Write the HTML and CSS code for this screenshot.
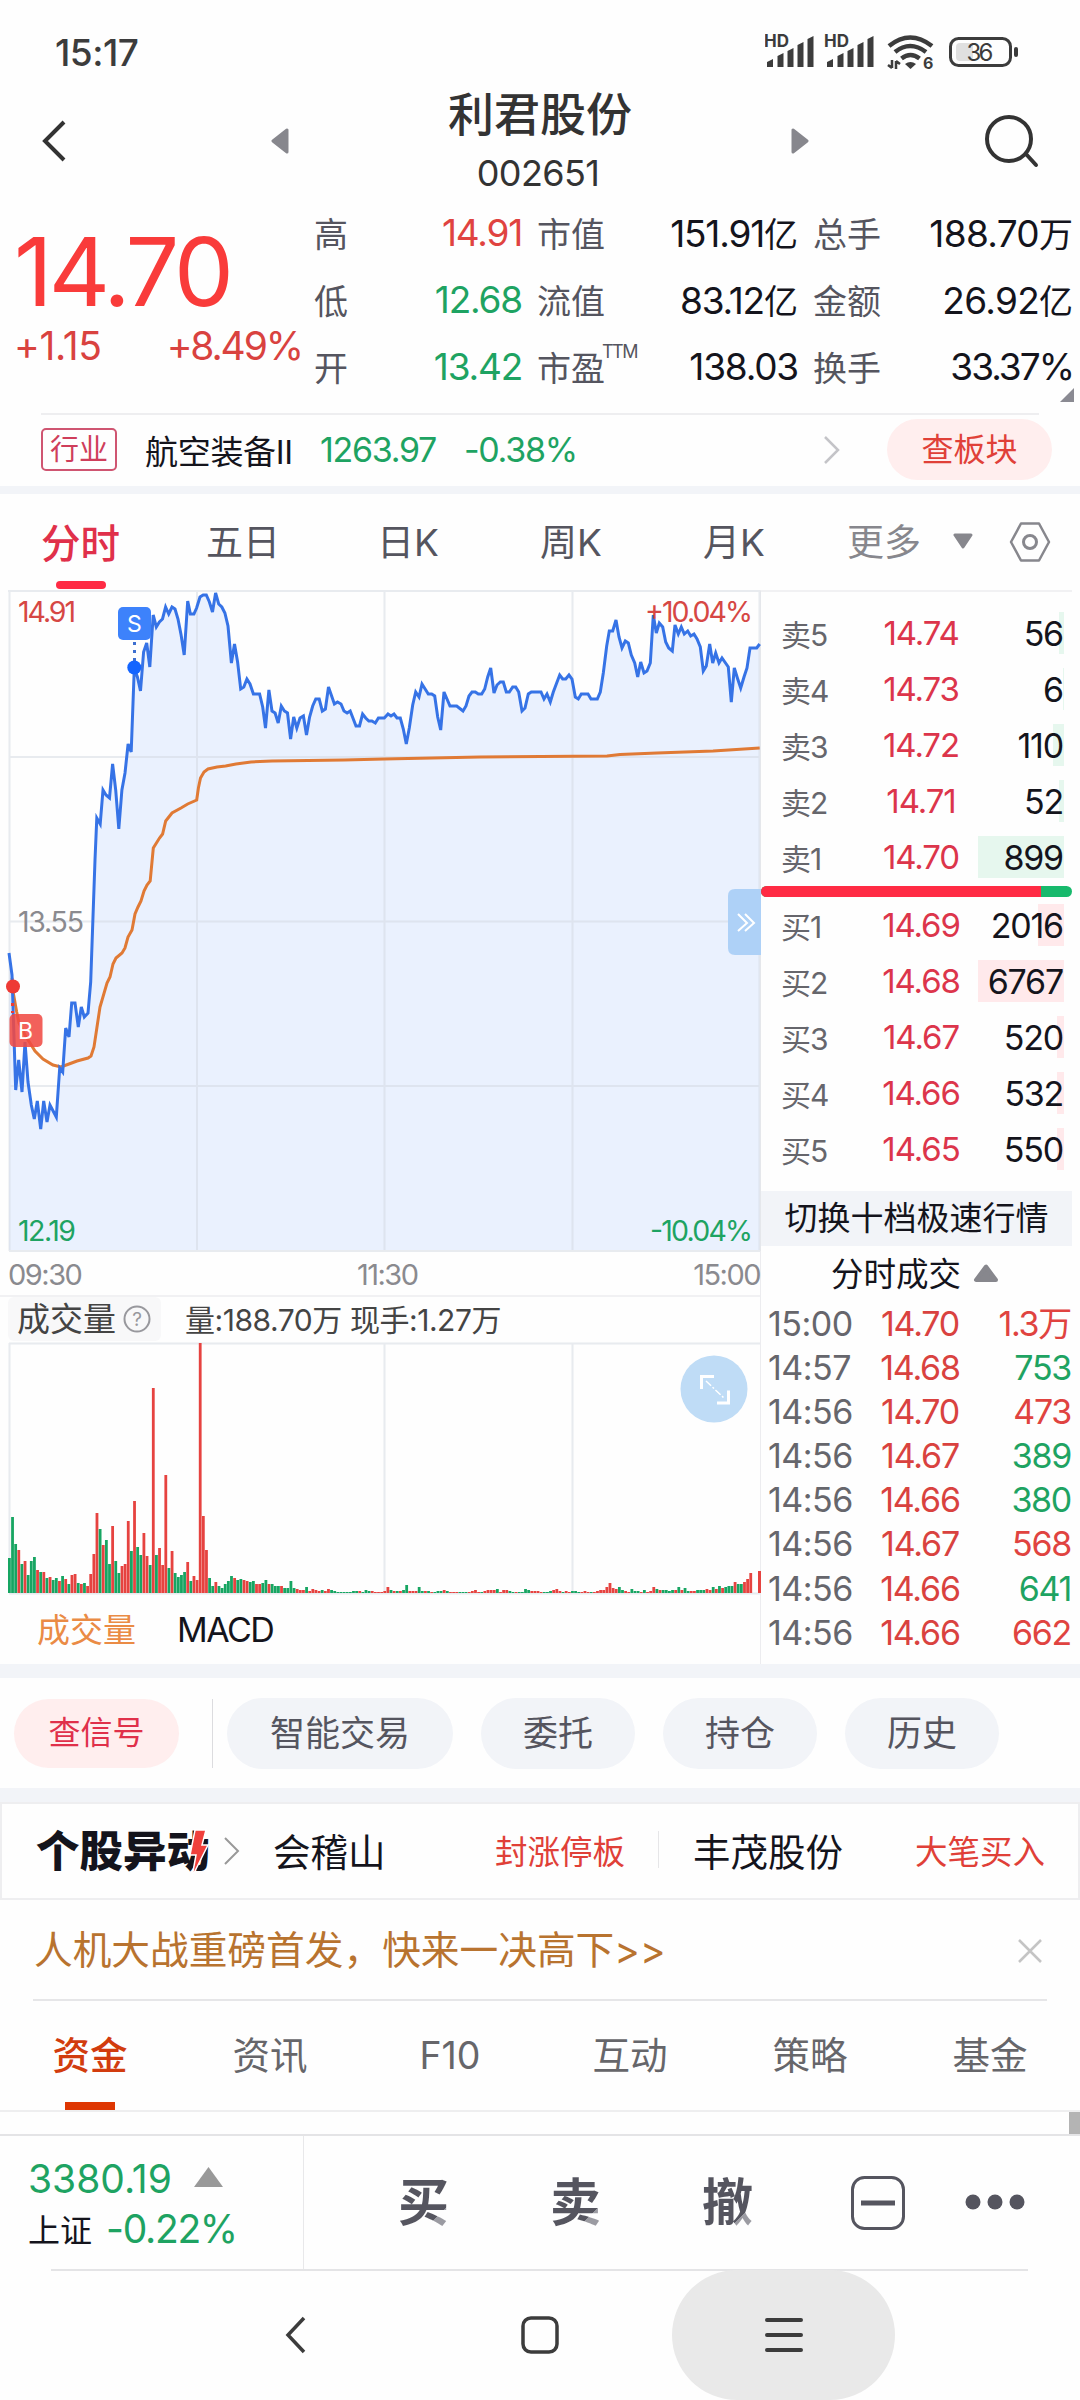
FILE: index.html
```html
<!DOCTYPE html>
<html lang="zh-CN">
<head>
    <meta charset="UTF-8">
    <title>利君股份 002651</title>
    <link rel="stylesheet" href="styles.css">
</head>
<body>
    <div class="status-bar">
        <span class="clock">15:17</span>
        <svg class="status-icons" width="270" height="40" viewBox="0 0 270 40">
            <defs>
                <g id="signal">
                    <text x="-1" y="14" font-size="17" font-weight="700" textLength="25">HD</text>
                    <path d="M2 34v-5l6-3v8zM12.500 34V23l6-3v14zM22.500 34V18l6-3v19zM32.500 34V12l6-3v25zM42.500 34V6l6-3v31z"/>
                </g>
            </defs>
            <use href="#signal" x="0"/>
            <use href="#signal" x="60"/>
            <g fill="none" stroke="#3c3c3c" stroke-width="4.500">
                <path d="M124 13q21-17 43 0M130 19q15-12 31 0M136.500 25.500q9-7 18 0"/>
            </g>
            <path d="M140 31q5.500-4 11 0l-5.500 5z"/>
            <path d="M127 27v8M127 35l-4-3M131 36v-8M131 28l4 3" stroke="#3c3c3c" stroke-width="2.500"/>
            <text x="158" y="36" font-size="16" font-weight="700">6</text>
            <rect x="185.500" y="5.500" width="60" height="27" rx="8" fill="none" stroke="#3c3c3c" stroke-width="3"/>
            <rect x="191" y="10" width="17" height="18" rx="4" fill="#e0e0e0"/>
            <rect x="249" y="14" width="4" height="10" rx="2"/>
            <text x="201.500" y="28" font-size="24" textLength="27">36</text>
        </svg>
    </div>

    <div class="header">
        <svg class="back" width="26" height="42" viewBox="0 0 26 42"><path d="M23 2L4 21l19 19" fill="none" stroke="#333" stroke-width="4"/></svg>
        <svg class="prev" width="18" height="26" viewBox="0 0 18 26"><path d="M16 2v22L2 13z"/></svg>
        <div class="stock">
            <div class="stock-name">利君股份</div>
            <div class="stock-code">002651</div>
        </div>
        <svg class="next" width="18" height="26" viewBox="0 0 18 26"><path d="M2 2v22L16 13z"/></svg>
        <svg class="search" width="56" height="56" viewBox="0 0 56 56"><path d="M42 40l10 11" stroke="#333" stroke-width="4" stroke-linecap="round"/><circle cx="25" cy="25" r="22" fill="none" stroke="#333" stroke-width="4"/></svg>
    </div>

    <div class="quote">
        <div class="price-box">
            <div class="price">14.70</div>
            <div class="change"><span class="diff">+1.15</span><span>+8.49%</span></div>
        </div>
        <div class="stats">
            <span>高</span><b class="red">14.91</b><span>市值</span><b>151.91<i>亿</i></b><span>总手</span><b>188.70<i>万</i></b>
            <span>低</span><b class="green">12.68</b><span>流值</span><b>83.12<i>亿</i></b><span>金额</span><b>26.92<i>亿</i></b>
            <span>开</span><b class="green">13.42</b><span class="ttm">市盈<sup>TTM</sup></span><b>138.03</b><span>换手</span><b class="rate">33.37%</b>
        </div>
        <svg class="corner" width="14" height="14" viewBox="0 0 14 14"><path d="M14 0v14H0z" fill="#8a8a92"/></svg>
    </div>

    <div class="industry">
        <span class="tag">行业</span>
        <span class="industry-name">航空装备II</span>
        <span class="index-value">1263.97</span>
        <span class="index-change">-0.38%</span>
        <svg class="arrow" width="16" height="28" viewBox="0 0 16 28"><path d="M1 1l13 13L1 27" fill="none" stroke="#c4c4c8" stroke-width="2.500"/></svg>
        <span class="plate">查板块</span>
    </div>
    <div class="band band-small"></div>

    <div class="period-tabs">
        <span class="active">分时</span><span class="five">五日</span><span>日K</span><span>周K</span><span>月K</span><span class="more">更多</span>
        <svg class="more-arrow" width="20" height="17" viewBox="0 0 20 17"><path d="M2 2h16l-8 12z" fill="#87878d" stroke="#87878d" stroke-width="3" stroke-linejoin="round"/></svg>
        <svg class="setting" width="42" height="42" viewBox="0 0 42 42"><g fill="none" stroke="#87878d"><path d="M12 2.500h18L40 21 30 39.500H12L2 21z" stroke-width="2.500" stroke-linejoin="round"/><circle cx="21" cy="21" r="6.500" stroke-width="3"/></g></svg>
    </div>

    <div class="market">
        <div class="charts">
            <!-- minute chart -->
            <svg class="minute" width="761" height="662" viewBox="0 590 761 662">
                <path class="area" d="M9 1250V953L12 975 15.700 1090 18.700 1060 22 1092 25 1042 28 1082 31.300 1105 34.300 1119 37.300 1101 40.700 1129 43.700 1101 47 1122 50 1105 56.300 1117 59.700 1068 62.700 1072 65.700 1028 69 1037 71.700 1003 75 1003 78.300 1027 81.300 1007 84.300 1017 88 1013 90.700 982 95 860 96.800 818 100.200 824 103 790 106 795 109.500 798 112.600 764 115.700 790 118.800 829 121.900 790 125 773 128.100 744 131.200 752 134.300 668 137.400 677 140.500 691 143.600 652 146.700 643 149.800 667 153.200 615 156.300 627 159.400 622 162.500 619 165.600 607 168.700 614 172 607 175 609 178 619 181.100 635 184.200 655 187.700 601 190.400 614 193.900 614 196.600 608 200 597 203.200 595 206.300 595 209.400 602 212.500 612 215.600 593 218.700 604 221.800 607 224.900 613 228 626 231.400 663 234.500 644 237.600 662 240.700 689 243.800 687 246.900 679 250 684 253.400 694 259.600 694 262.700 707 265.500 728 268.900 690 272 711 275.100 713 278.200 723 281.300 706 284.400 711 287.500 713 290.600 739 293.700 717 296.800 728 300 718 303.400 716 306.500 735 309.600 717 312.700 706 315.800 699 319.200 699 322.300 711 325.400 709 328.500 687 334.400 704 337.500 702 341 704 344 711 347.100 713 350.200 711 356 726 359.500 726 362.600 714 365.700 718 368.800 721 371.900 721 375.300 723 378.400 718 384.300 718 388 714 391 716 394 714 397 718 400.300 718 403.300 729 406.300 744 409.300 728 412.700 705 415.700 692 419 697 422 684 428.300 694 431.700 694 434.700 696 437.700 717 440.700 730 444 692 450 706 456.700 706 463 711 466 706 469 696 472 692 475.300 692 478.300 694 481.700 694 484.700 689 487.700 677 490.700 668 494 693 497 685 500.300 682 503.300 682 506.300 692 509.300 692 512.700 687 515.700 687 518.700 692 522 711 525 708 528.300 694 531.300 692 541 692 544 699 547 694 550.300 702 553.300 692 556.300 684 559.700 675 562.700 679 565.700 679 569 675 572 679 575.300 697 578.300 699 581.300 694 588 694 591 699 597.300 699 600.300 692 603.300 673 606.700 646 609.300 631 612.700 631 616 620 619 637 622 648 625.300 641 628.300 643 631.300 655 634.700 663 637.700 677 640.700 662 644 673 647 671 650.300 663 653.300 615 656.300 633 659.300 623 662.700 627 665.700 642 668.700 648 672.300 651 675 625 678.300 634 681.300 627 684.300 634 687.700 631 690.700 636 694 634 697 639 700.300 647 703.300 671 706.300 666 709.700 644 712.700 663 715.700 653 719 663 722 658 728.300 667 731.300 702 734.300 668 737.700 679 740.700 688 744 677 747 668 750 648 756.700 648 759.700 644V1250z"/>
                <path class="grid-line" d="M8 591H760M9 757H760M9 921.500H760M9 1086H760M9 1251H760M9.500 591V1251M197 592V1250M384.500 592V1250M572.500 592V1250M759.500 591V1251"/>
                <path class="average" d="M12 978L13.300 993 16.700 1012 19 1023 25 1035 30 1043 35 1051 43 1059 53 1065 61 1067 69 1064 77 1061 88 1058 91 1056 94 1047 97 1027 100 1007 107 983 110 977 113 964 116 958 122 953 125 948 128 937 132 930 135 914 138 907 141 901 144 891 147 885 150.200 881 153.300 848 159.500 838 162.600 834 165.700 821 172 813 181 808 187.700 804 196.700 800 198.400 788 200.500 778 204 772 208 769 217 767 225.600 766 236 764 251 762 272 761 344 760 384 759 480 757 607 756 620 754.500 657 753 713 751 759.700 748"/>
                <path class="trend" id="trend" d=""/>
                <path d="M134.500 642v22" stroke="#3d6fd0" stroke-width="3" stroke-dasharray="3 5"/>
                <rect x="118" y="607" width="33" height="33" rx="5" fill="#3d82fb"/>
                <text class="mark" x="134.500" y="632" text-anchor="middle">S</text>
                <circle cx="134.300" cy="667.500" r="7" fill="#1465ff"/>
                <circle cx="13" cy="986.500" r="7" fill="#ee3a35"/>
                <path d="M12.500 1003v10" stroke="#ee3a35" stroke-width="3" stroke-dasharray="3 5"/>
                <rect x="9.500" y="1014" width="33" height="33" rx="5" fill="#f04a43" opacity=".87"/>
                <text class="mark" x="25.500" y="1038.500" text-anchor="middle">B</text>
                <text x="18" y="622" fill="#d64744" textLength="58">14.91</text>
                <text x="18" y="932" fill="#8a8a8f" textLength="66">13.55</text>
                <text x="18" y="1241" fill="#1ea362" textLength="58">12.19</text>
                <text x="645" y="622" fill="#d64744" textLength="108">+10.04%</text>
                <text x="650" y="1241" fill="#1ea362" textLength="103">-10.04%</text>
                <path d="M761 889h-26q-7 0-7 7v52q0 7 7 7h26z" fill="#aed1f7"/>
                <path d="M738 914l9 9-9 8M745 914l9 9-9 8" fill="none" stroke="#fff" stroke-width="2"/>
            </svg>
            <div class="time-axis"><span>09:30</span><span>11:30</span><span>15:00</span></div>
            <div class="volume-head">
                <span class="volume-label">成交量<svg width="28" height="28" viewBox="0 0 28 28"><circle cx="14" cy="14" r="12.500" fill="none" stroke="#98989d" stroke-width="2"/><text x="14" y="21" text-anchor="middle" font-size="19">?</text></svg></span>
                <span class="volume-info">量:188.70万 现手:1.27万</span>
            </div>
            <svg class="volume" width="761" height="254" viewBox="0 1342 761 254">
                <path class="grid-line" d="M9 1343.500H760M9 1593.500H760M9.500 1343V1593M384.500 1343V1593M572.500 1343V1593"/>
                <g id="bars"></g>
                <circle cx="714" cy="1389" r="33.500" fill="#bfdcf6"/>
                <path d="M701.500 1389v-12.500H714M717 1403h11.500v-12.500" fill="none" stroke="#fff" stroke-width="3"/>
                <path d="M706 1381l18 17" stroke="#fff" stroke-width="1.500" stroke-dasharray="7 2 2 2"/>
            </svg>
            <div class="indicators"><span class="on">成交量</span><span>MACD</span></div>
        </div>

        <div class="side">
            <div class="book" id="sells"></div>
            <div class="ratio"><i></i></div>
            <div class="book" id="buys"></div>
            <div class="switch">切换十档极速行情</div>
            <div class="deal-title">分时成交<svg width="26" height="19" viewBox="0 0 26 19"><path d="M13 2.500L3 16h20z" fill="#87878d" stroke="#87878d" stroke-width="4" stroke-linejoin="round"/></svg></div>
            <div class="deals" id="deals"></div>
        </div>
    </div>
    <div class="band"></div>

    <div class="actions">
        <span class="signal">查信号</span>
        <i class="divider"></i>
        <span class="wide">智能交易</span><span>委托</span><span>持仓</span><span>历史</span>
    </div>
    <div class="band"></div>

    <div class="movers">
        <div class="logo">个股异动<svg width="24" height="50" viewBox="0 0 24 50"><path d="M8 2h11l-4 15h6L5 49l4-22H3z" fill="#f0403c" stroke="#fff" stroke-width="1.500"/></svg></div>
        <svg class="arrow" width="16" height="28" viewBox="0 0 16 28"><path d="M1 1l13 13L1 27" fill="none" stroke="#999" stroke-width="2"/></svg>
        <span class="mover-name">会稽山</span><span class="mover-tip">封涨停板</span>
        <i class="divider"></i>
        <span class="mover-name">丰茂股份</span><span class="mover-tip">大笔买入</span>
    </div>

    <div class="promo">
        <span>人机大战重磅首发，快来一决高下&gt;&gt;</span>
        <svg width="24" height="24" viewBox="0 0 24 24"><path d="M1 1l22 22M23 1L1 23" stroke="#c4c4c4" stroke-width="2.500"/></svg>
    </div>

    <div class="info-tabs">
        <span class="active">资金</span><span>资讯</span><span>F10</span><span>互动</span><span>策略</span><span>基金</span>
    </div>
    <div class="content"><i></i></div>

    <div class="toolbar">
        <div class="index">
            <div class="index-row"><b>3380.19</b><svg width="29" height="20" viewBox="0 0 29 20"><path d="M14.500 0L29 20H0z" fill="#999"/></svg></div>
            <div class="index-row"><span>上证</span><b>-0.22%</b></div>
        </div>
        <div class="trade">
            <span>买</span><span>卖</span><span>撤</span>
            <svg class="minus" width="54" height="54" viewBox="0 0 54 54"><rect x="1.500" y="1.500" width="51" height="51" rx="12" fill="none" stroke="#55555f" stroke-width="3"/><path d="M10 27h34" stroke="#55555f" stroke-width="5"/></svg>
            <svg class="dots" width="60" height="16" viewBox="0 0 60 16" fill="#55555f"><circle cx="8" cy="8" r="7.500"/><circle cx="30" cy="8" r="7.500"/><circle cx="52" cy="8" r="7.500"/></svg>
        </div>
    </div>

    <div class="nav">
        <svg class="nav-back" width="22" height="38" viewBox="0 0 22 38"><path d="M19 2L3 19l16 17" fill="none" stroke="#3c3c3c" stroke-width="3.500"/></svg>
        <svg class="nav-home" width="38" height="38" viewBox="0 0 38 38"><rect x="2" y="2" width="34" height="34" rx="8" fill="none" stroke="#3c3c3c" stroke-width="3.500"/></svg>
        <div class="nav-menu"><svg width="38" height="34" viewBox="0 0 38 34"><path d="M2 2h34M2 17h34M2 32h34" stroke="#3c3c3c" stroke-width="4" stroke-linecap="round"/></svg></div>
    </div>

    <script src="script.js"></script>
</body>
</html>
```

FILE: styles.css
```css
* {
    box-sizing: border-box;
}
body {
    margin: 0;
    width: 1080px;
    height: 2400px;
    overflow: hidden;
    background: #fefefe;
    color: #14141c;
    font-family: Inter, "Noto Sans CJK SC", sans-serif;
}
svg {
    display: block;
    flex: none;
}
svg text {
    font-family: Inter, sans-serif;
}
span, b {
    white-space: nowrap;
}
b, i {
    font-weight: 400;
    font-style: normal;
}
.red {
    color: #e04340;
}
.green {
    color: #1ea362;
}

/* status bar */
.status-bar {
    height: 80px;
    padding: 33px 0 0 55px;
    display: flex;
}
.clock {
    width: 710px;
    font-size: 37px;
    font-weight: 500;
    line-height: 40px;
    letter-spacing: -.500px;
    color: #3c3c3c;
}
.status-icons {
    fill: #3c3c3c;
}

/* title */
.header {
    height: 120px;
    display: flex;
    align-items: center;
    padding-left: 41px;
}
.back, .prev, .next {
    margin-top: 1px;
}
.prev {
    margin-left: 204px;
    fill: #87878d;
}
.next {
    fill: #87878d;
}
.prev path, .next path {
    stroke: #87878d;
    stroke-width: 3;
    stroke-linejoin: round;
}
.stock {
    width: 502px;
    text-align: center;
    color: #333;
}
.stock-name {
    font-size: 46px;
    font-weight: 500;
    line-height: 66px;
}
.stock-code {
    padding-right: 4px;
    font-size: 36px;
    line-height: 52px;
    letter-spacing: -.600px;
}
.search {
    margin-left: 175px;
    margin-top: 3px;
}

/* quote */
.quote {
    position: relative;
    height: 213px;
    display: flex;
}
.price-box {
    width: 314px;
    padding: 20px 0 0 14px;
    color: #f93b3a;
}
.price {
    font-size: 95px;
    line-height: 104px;
    letter-spacing: -3.800px;
}
.change {
    display: flex;
    justify-content: space-between;
    width: 288px;
    font-size: 39px;
    line-height: 44px;
    letter-spacing: -2.100px;
    color: #d9423f;
}
.change .diff {
    letter-spacing: -.300px;
}
.stats {
    display: grid;
    grid-template-columns: 60px 148px 91px 185px 91px 186px;
    grid-auto-rows: 67px;
    align-items: center;
    width: 761px;
    margin-top: -1px;
    font-size: 37px;
}
.stats span {
    font-size: 34px;
    color: #55555f;
}
.stats b {
    text-align: right;
    letter-spacing: -1.200px;
}
.stats b:nth-child(6n) {
    letter-spacing: -.700px;
    padding-right: 2px;
}
.stats .rate:nth-child(6n) {
    letter-spacing: -2px;
}
.stats span:nth-child(6n+3), .stats span:nth-child(6n+5) {
    padding-left: 15px;
}
.stats i {
    font-size: 34px;
    letter-spacing: 0;
}
.ttm {
    position: relative;
}
.ttm sup {
    position: absolute;
    left: 80px;
    top: 0;
    font-size: 18px;
    line-height: 20px;
    letter-spacing: -1.500px;
}
.corner {
    position: absolute;
    left: 1060px;
    top: 188px;
}

/* industry */
.industry {
    height: 73px;
    margin: 0 28px 0 41px;
    display: flex;
    align-items: center;
    position: relative;
}
.industry::before {
    content: "";
    position: absolute;
    left: 0;
    top: 0;
    width: 998px;
    border-top: 2px solid #eeeef0;
}
.tag {
    width: 76px;
    height: 43px;
    line-height: 40px;
    border: 2px solid #cf5571;
    border-radius: 5px;
    text-align: center;
    font-size: 29px;
    color: #cf3e5b;
}
.industry-name {
    margin-left: 28px;
    width: 175px;
    font-size: 33px;
    letter-spacing: -.3px;
}
.index-value {
    width: 144px;
    font-size: 34px;
    letter-spacing: -1.300px;
    color: #1ea362;
}
.index-change {
    width: 360px;
    font-size: 34px;
    letter-spacing: -1.300px;
    color: #1ea362;
}
.plate {
    margin-left: auto;
    width: 165px;
    height: 61px;
    line-height: 62px;
    border-radius: 31px;
    background: #ffeeee;
    color: #e04038;
    text-align: center;
    font-size: 32px;
}
.band {
    height: 14px;
    background: #f2f4f8;
}
.band-small {
    height: 8px;
}

/* period tabs */
.period-tabs {
    position: relative;
    height: 96px;
    display: flex;
    align-items: center;
    padding-left: 41px;
    font-size: 37px;
    color: #55555f;
}
.period-tabs span {
    width: 163px;
    margin-top: -4px;
}
.period-tabs .active {
    width: 165px;
    color: #e0304a;
    font-size: 39.500px;
    font-weight: 500;
}
.period-tabs .five {
    width: 171px;
}
.period-tabs .active::after {
    content: "";
    position: absolute;
    left: 56px;
    bottom: 1px;
    width: 50px;
    height: 8px;
    border-radius: 4px;
    background: #ff2b44;
}
.period-tabs .more {
    width: 106px;
    margin-left: -19px;
    color: #87878d;
}
.more-arrow {
    margin-top: -2px;
}
.setting {
    margin-left: 36px;
}

/* charts and order book */
.market {
    display: flex;
    height: 1074px;
}
.charts {
    width: 761px;
    border-right: 1px solid #ececef;
}
.minute {
    font-size: 28.500px;
}
.area {
    fill: #eaf1fe;
}
.grid-line {
    fill: none;
    stroke: #d2d7e0;
    stroke-opacity: .5;
    stroke-width: 2;
}
.average {
    fill: none;
    stroke: #e07a35;
    stroke-width: 3;
}
.trend {
    fill: none;
    stroke: #3673e6;
    stroke-width: 3;
}
.minute .mark {
    font-size: 23px;
    fill: #fff;
}
.time-axis {
    display: flex;
    justify-content: space-between;
    height: 45px;
    padding: 3px 0 0 8px;
    line-height: 40px;
    font-size: 29px;
    letter-spacing: -1.500px;
    color: #8a8a8f;
    border-bottom: 2px solid #f1f1f3;
}
.volume-head {
    height: 45px;
    display: flex;
    margin-left: 8px;
    color: #444;
}
.volume-label {
    width: 153px;
    height: 44px;
    line-height: 46px;
    padding-left: 9px;
    display: flex;
    align-items: center;
    background: #f8f8f9;
    border-radius: 6px;
    font-size: 33px;
}
.volume-label svg {
    margin-left: 7px;
}
.volume-label text {
    fill: #98989d;
}
.volume-info {
    margin-left: 24px;
    font-size: 30px;
    line-height: 46px;
    letter-spacing: -.450px;
}
.indicators {
    display: flex;
    height: 68px;
    padding-left: 37px;
    font-size: 33px;
    line-height: 68px;
}
.indicators .on {
    width: 140px;
    color: #ea8b45;
}
.indicators span + span {
    letter-spacing: -1.500px;
    font-size: 34px;
}
.side {
    width: 311px;
    border-top: 2px solid #f1f1f3;
    height: 1074px;
    overflow: hidden;
}
.book {
    padding: 13px 8px 0 20px;
}
.book + .ratio {
    margin-top: 1px;
}
.ratio + .book {
    padding-top: 0;
}
.level {
    height: 56px;
    display: flex;
    align-items: center;
    position: relative;
    letter-spacing: -1px;
}
.level span {
    width: 74px;
    font-size: 30px;
    color: #66666c;
}
.level b {
    width: 132px;
    text-align: center;
    font-size: 33px;
    color: #dc354b;
    letter-spacing: -1.100px;
}
.level em {
    flex: 1;
    padding-right: 1px;
    position: relative;
    text-align: right;
    font-style: normal;
    font-size: 34px;
    letter-spacing: -1.200px;
}
.level i {
    position: absolute;
    right: 0;
    top: 7px;
    height: 42px;
    background: #e6f7ee;
}
#buys .level i {
    background: #ffe9eb;
}
.ratio {
    height: 11px;
    border-radius: 6px;
    background: #17b96c;
    overflow: hidden;
}
.ratio i {
    display: block;
    width: 280px;
    height: 11px;
    background: #ff2b44;
}
.switch {
    height: 55px;
    margin-top: 14px;
    background: #f2f4f8;
    line-height: 54px;
    text-align: center;
    font-size: 33px;
}
.deal-title {
    height: 56px;
    padding: 0 0 5px 70px;
    display: flex;
    align-items: center;
    font-size: 32.500px;
}
.deal-title svg {
    margin: 4px 0 0 12px;
}
.deal {
    height: 44.100px;
    line-height: 44px;
    display: flex;
    font-size: 34px;
    padding-left: 7px;
    letter-spacing: -1.300px;
}
.deal span {
    width: 106px;
    color: #66666c;
    letter-spacing: -.500px;
}
.deal b {
    width: 92px;
    text-align: center;
    letter-spacing: -1.200px;
    color: #d9423f;
}
.deal em {
    flex: 1;
    padding-right: 1px;
    text-align: right;
    font-style: normal;
}

/* action pills */
.actions {
    height: 110px;
    display: flex;
    align-items: center;
    padding-left: 14px;
    color: #55555f;
    font-size: 35px;
}
.actions span {
    width: 154px;
    height: 71px;
    line-height: 70px;
    margin-left: 28px;
    border-radius: 36px;
    background: #f2f4f8;
    text-align: center;
}
.actions .signal {
    width: 165px;
    height: 69px;
    line-height: 68px;
    margin-left: 0;
    background: #ffeeee;
    color: #e0304a;
    font-size: 32px;
}
.actions .divider {
    width: 1px;
    height: 69px;
    margin-left: 33px;
    background: #dcdcdf;
}
.actions .wide {
    width: 226px;
    margin-left: 14px;
}

/* movers */
.movers {
    height: 98px;
    display: flex;
    align-items: center;
    border: 2px solid #eeeef0;
    padding: 0 0 3px 34px;
}
.logo {
    position: relative;
    width: 174px;
    padding-top: 2px;
    font-size: 43.500px;
    font-weight: 900;
    line-height: 60px;
    white-space: nowrap;
}
.logo svg {
    position: absolute;
    left: 151px;
    top: 9px;
}
.movers .arrow {
    margin: 2px 0 0 14px;
}
.mover-name {
    font-size: 37.500px;
    width: 222px;
    margin-left: 34px;
}
.mover-tip {
    width: 163px;
    font-size: 32.500px;
    color: #e04038;
}
.movers .divider {
    width: 1px;
    height: 37px;
    background: #e6e6e8;
}
.movers .arrow + .mover-name {
    width: 222px;
    margin-left: 33px;
}

/* promo */
.promo {
    height: 101px;
    margin: 0 33px;
    padding: 0 5px 5px 1px;
    display: flex;
    justify-content: space-between;
    align-items: center;
    border-bottom: 2px solid #e6e6e8;
    font-size: 38.700px;
    color: #b8732f;
}
.promo svg {
    margin-top: 7px;
}
.info-tabs {
    display: flex;
    height: 111px;
    border-bottom: 2px solid #eeeeef;
}
.info-tabs span {
    position: relative;
    width: 180px;
    text-align: center;
    font-size: 37.500px;
    line-height: 110px;
    color: #66666a;
}
.info-tabs .active {
    color: #d23c0e;
    font-weight: 500;
}
.info-tabs .active::after {
    content: "";
    position: absolute;
    left: 65px;
    bottom: 0;
    width: 50px;
    height: 8px;
    background: #de3602;
}
.content {
    height: 22px;
    display: flex;
    justify-content: flex-end;
}
.content i {
    width: 11px;
    background: #b4b4b4;
}

/* bottom toolbar */
.toolbar {
    height: 136px;
    display: flex;
    border-top: 2px solid #e4e4e6;
}
.index {
    width: 304px;
    padding: 17px 0 0 28px;
    border-right: 1px solid #e8e8ea;
}
.index-row {
    height: 50px;
    display: flex;
    align-items: center;
    font-size: 32px;
}
.index-row b {
    font-size: 39px;
    letter-spacing: -1.300px;
    color: #1ea362;
}
.index-row:first-child b {
    width: 143px;
    letter-spacing: 0;
}
.index-row svg {
    margin: -2px 0 0 23px;
}
.index-row span + b {
    margin-left: 14px;
}
.trade {
    display: flex;
    align-items: center;
    padding-left: 94px;
}
.trade span {
    width: 52px;
    margin-right: 100px;
    font-size: 51px;
    font-weight: 700;
    line-height: 60px;
    /* the last stroke of each character is lighter */
    background: linear-gradient(135deg, #55555f 74%, #9b9ba2 74%);
    -webkit-background-clip: text;
    background-clip: text;
    color: transparent;
}
.trade .minus {
    margin-left: -3px;
}
.trade .dots {
    margin: -2px 0 0 60px;
}

/* system navigation */
.nav {
    position: relative;
    height: 130px;
    display: flex;
    align-items: center;
    padding-left: 285px;
}
.nav::before {
    content: "";
    position: absolute;
    left: 51px;
    top: -1px;
    width: 977px;
    border-top: 2px solid #e4e4e6;
}
.nav-home {
    margin-left: 214px;
}
.nav-menu {
    position: relative;
    width: 223px;
    height: 130px;
    margin-left: 113px;
    border-radius: 65px;
    background: #e9e9e9;
    display: flex;
    align-items: center;
    justify-content: center;
}
```

FILE: script.js
```js
// price line follows the top edge of the filled area
const area = document.querySelector('.area').getAttribute('d');
document.getElementById('trend').setAttribute('d', area.replace('M9 1250V953L', 'M9 953L').replace('V1250z', ''));

// one entry per minute: colour + bar height
const volumes = ('g35 g76 g49 r43 g29 r32 g18 g32 g36 r23 g21 r21 g15 r16 g13 g15 r12 g17 r14 g9 r18 r19 g10 r9 g10 r7 ' +
    'r19 r39 r80 g64 r48 g53 g29 r67 g32 g20 r27 r29 r72 g42 r92 g46 g38 r60 r37 g28 r205 g38 r45 r28 r118 g25 r42 ' +
    'g20 g16 g18 g21 r31 g12 r17 r13 r250 r77 r43 g15 g7 r11 g7 g5 g9 g12 g17 r15 g13 g14 r13 r12 g11 g12 r9 r9 g10 ' +
    'g13 r9 g9 g7 g7 r7 g5 g5 g12 g5 r4 r3 r3 g6 r2 r4 r3 r2 g3 r2 r4 g3 g2 g1 g1 g1 g1 g1 g2 g2 r2 g1 g3 g2 r2 r1 ' +
    'r1 r1 r2 r6 g3 r2 g2 r2 g3 g8 r2 r2 r2 g6 g2 r2 g2 r1 g1 g2 g2 r3 g2 r1 r1 r1 g1 g1 g1 r1 r2 r3 r1 g1 r2 r3 r3 ' +
    'r3 g4 r1 r3 r3 g2 g1 r1 g1 g1 g4 g3 r2 r2 r2 r1 g1 g1 g2 r3 r4 r2 g1 r2 r1 g2 g2 g1 r1 r2 r1 g1 r1 r2 ' +
    'r3 r3 r6 r10 r5 r4 g6 g3 r2 r1 g4 g2 g2 r1 g3 r1 r2 r6 g4 r3 g3 g3 g2 g3 r3 g6 r3 g5 g2 r2 r2 g3 g3 g3 r4 r3 g6 ' +
    'r4 g7 r5 g6 g7 g7 r11 g9 g9 r11 r14 r20').split(' ');
let bars = '';
volumes.forEach((v, i) => {
    const h = Number(v.slice(1));
    bars += `<rect x="${(8 + i * 3.128).toFixed(2)}" y="${1593 - h}" width="2.8" height="${h}" fill="${v[0] === 'r' ? '#e64340' : '#17a562'}"/>`;
});
bars += '<rect x="758" y="1571" width="3" height="22" fill="#e64340"/>';
document.getElementById('bars').innerHTML = bars;

// order book
const sells = [['卖5', '14.74', 56, 5], ['卖4', '14.73', 6, 1], ['卖3', '14.72', 110, 11], ['卖2', '14.71', 52, 5], ['卖1', '14.70', 899, 86]];
const buys = [['买1', '14.69', 2016, 26], ['买2', '14.68', 6767, 86], ['买3', '14.67', 520, 7], ['买4', '14.66', 532, 7], ['买5', '14.65', 550, 7]];
const level = r => `<div class="level"><i style="width:${r[3]}px"></i><span>${r[0]}</span><b>${r[1]}</b><em>${r[2]}</em></div>`;
document.getElementById('sells').innerHTML = sells.map(level).join('');
document.getElementById('buys').innerHTML = buys.map(level).join('');

// latest deals
const deals = [
    ['15:00', '14.70', '1.3万', 'red'],
    ['14:57', '14.68', '753', 'green'],
    ['14:56', '14.70', '473', 'red'],
    ['14:56', '14.67', '389', 'green'],
    ['14:56', '14.66', '380', 'green'],
    ['14:56', '14.67', '568', 'red'],
    ['14:56', '14.66', '641', 'green'],
    ['14:56', '14.66', '662', 'red'],
    ['14:56', '14.67', '380', 'green']
];
document.getElementById('deals').innerHTML = deals.map(d =>
    `<div class="deal"><span>${d[0]}</span><b>${d[1]}</b><em class="${d[3]}">${d[2]}</em></div>`).join('');
```
